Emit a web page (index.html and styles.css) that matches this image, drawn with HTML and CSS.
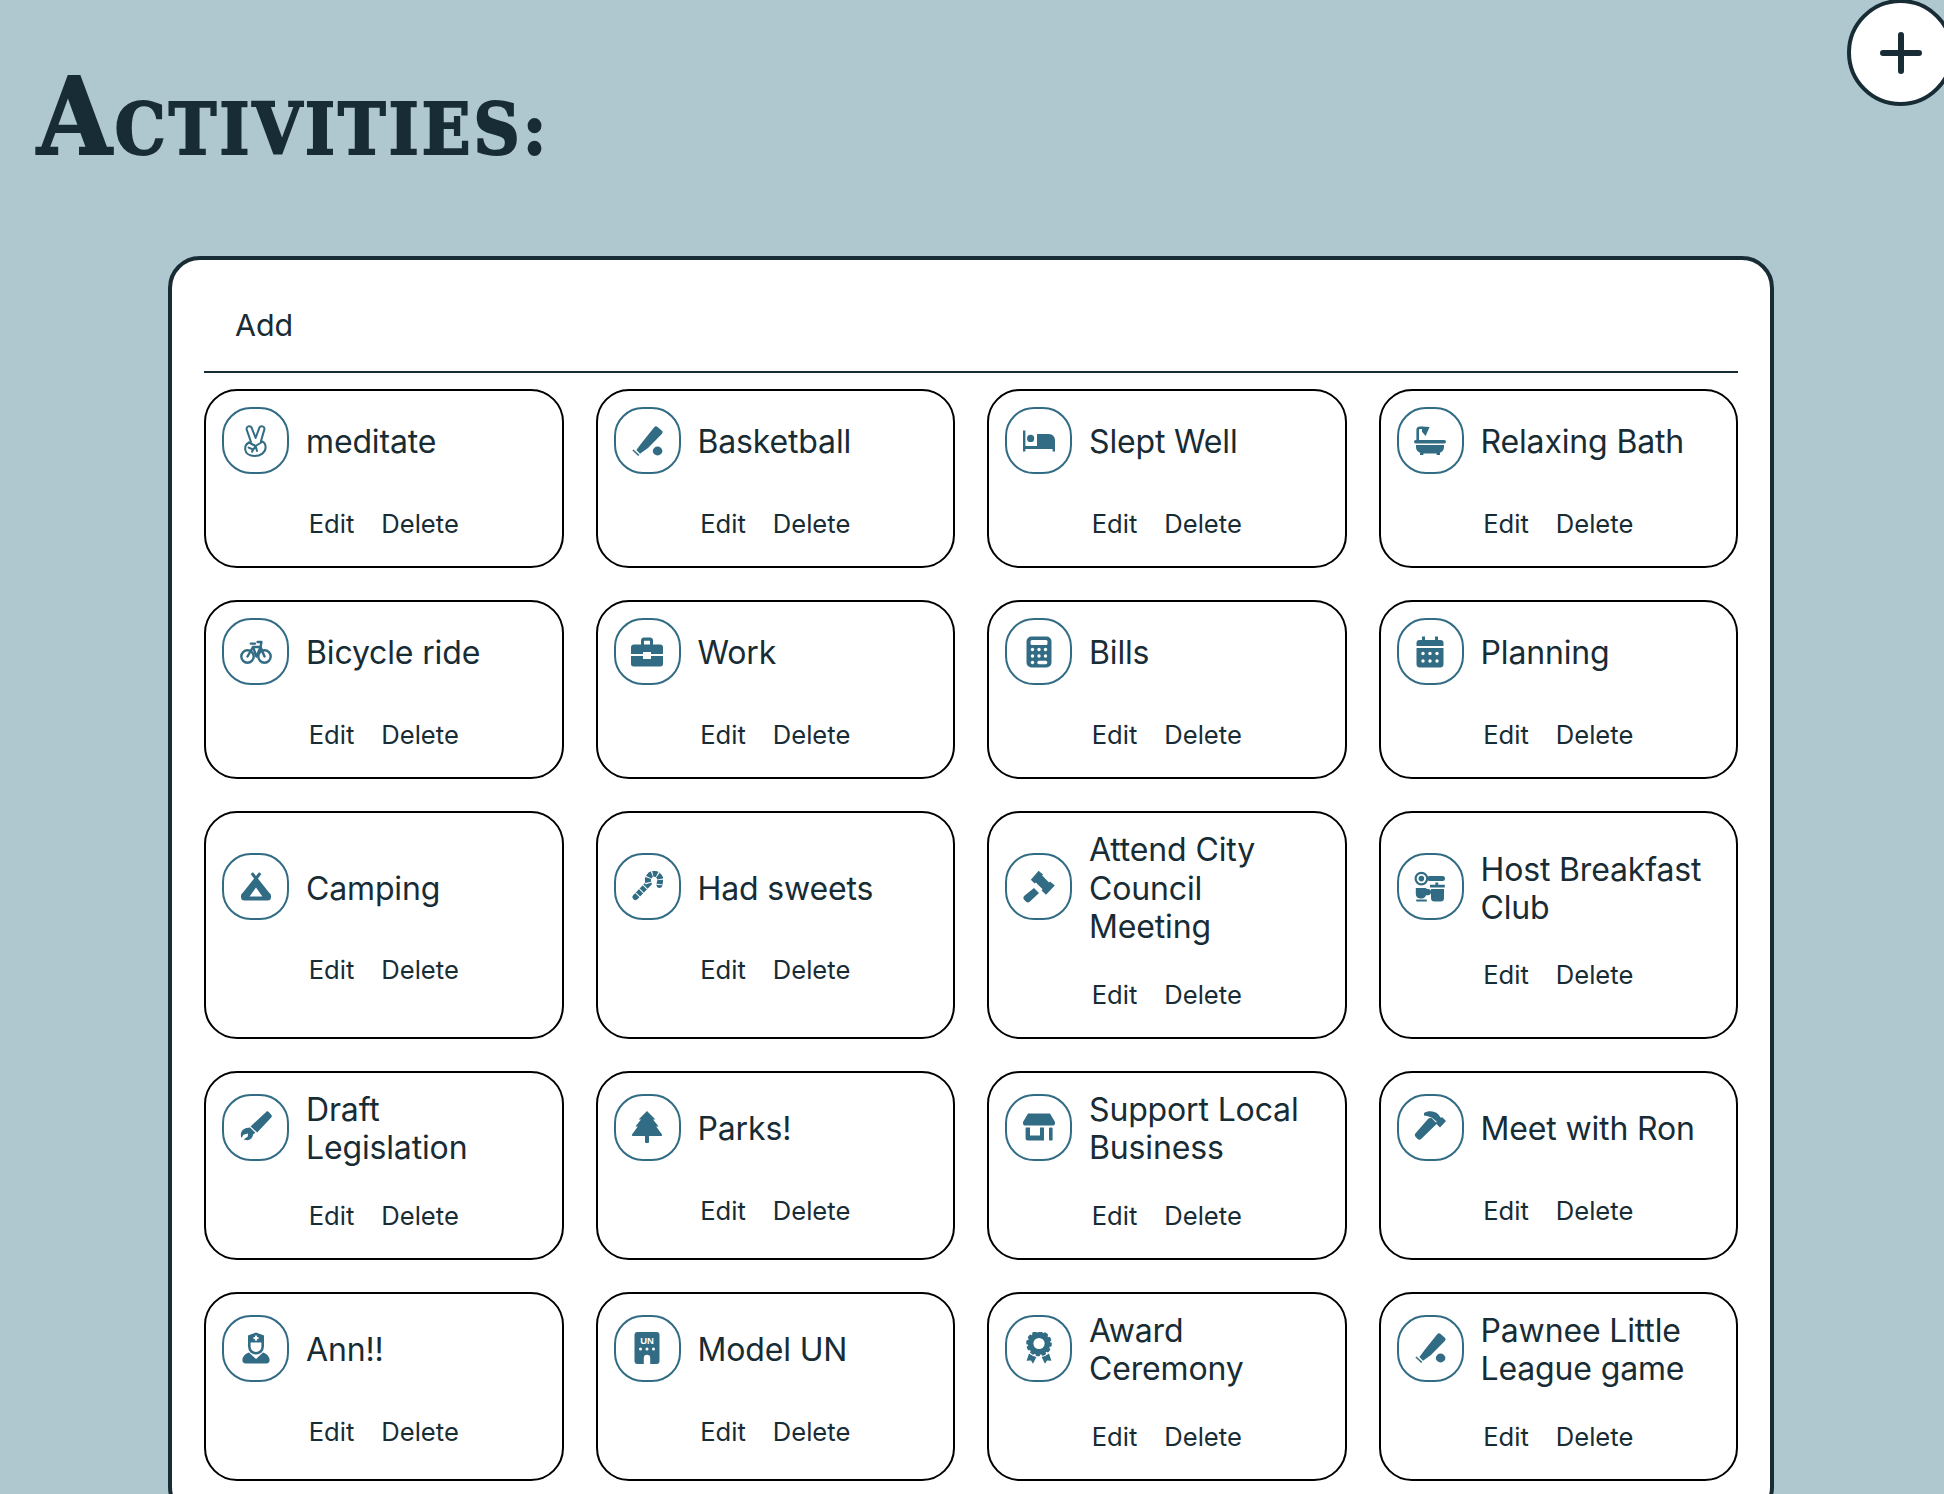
FILE: index.html
```html
<!DOCTYPE html>
<html lang="en">
<head>
    <meta charset="UTF-8">
    <meta name="viewport" content="width=device-width, initial-scale=1.0">
    <title>Activities</title>
    <link rel="stylesheet" href="styles.css">
</head>
<body>

<svg class="sprite" width="0" height="0">
    <symbol id="i-peace" viewBox="0 0 32 32">
        <g fill="none" stroke="currentColor" stroke-width="2" stroke-linecap="round" stroke-linejoin="round">
            <path d="M11 17 L6.6 4.4 a2.7 2.7 0 0 1 5 -1.8 L15.6 13 L19.4 2.6 a2.7 2.7 0 0 1 5 1.8 L21 16"/>
            <path d="M9 17.5 C6 19 5 22 5.2 24.4 C5.6 28.6 9.6 31 14.6 31 C20.6 31 25.6 27.4 25.6 22.6 C25.6 19 23.6 16.6 21 16"/>
            <path d="M9 17.5 L15.6 21 L22 17 M15.6 21 L12 26.6 M8.6 22.6 L12.6 24.2 M15.6 21 L17 26"/>
        </g>
    </symbol>
    <symbol id="i-bat" viewBox="0 0 32 32">
        <path d="M23.200 2.200 a2.400 2.400 0 0 1 3.400 -.2 l4 3.600 a2.400 2.400 0 0 1 .2 3.400 L17 23 L9 28.800 L5.400 25 L10.600 18 z"/>
        <path d="M2.400 24.400 L8.400 30 L7.200 31 L1.400 25.600 z"/>
        <ellipse cx="26.600" cy="26" rx="4.800" ry="4.400"/>
    </symbol>
    <symbol id="i-bed" viewBox="0 0 32 32">
        <path d="M0 5.500 h2.400 V21 H14 V9 H26 a6 6 0 0 1 6 6 V26.500 h-2.400 V24 H2.400 v2.500 H0 z"/>
        <circle cx="7.600" cy="13.400" r="3.600"/>
    </symbol>
    <symbol id="i-bath" viewBox="0 0 32 32">
        <rect x="0" y="15" width="32" height="3.400" rx="1.700"/>
        <path d="M2 20 H30 V22 a6.400 6.400 0 0 1 -4 5.800 V30 H22.600 V28.600 H9.400 V30 H6 V27.800 A6.400 6.400 0 0 1 2 22 z"/>
        <path d="M2.400 15 V5 a3.600 3.600 0 0 1 3.600 -3.600 H8.600 V4 H6 a1 1 0 0 0 -1 1 V15 z"/>
        <path d="M8 1.400 L15.600 2 L11.600 11 L8 6.800 z"/>
    </symbol>
    <symbol id="i-bike" viewBox="0 0 32 32">
        <g fill="none" stroke="currentColor" stroke-width="2.400" stroke-linecap="round" stroke-linejoin="round">
            <circle cx="7.500" cy="20.500" r="6.200"/>
            <circle cx="24.500" cy="20.500" r="6.200"/>
            <path d="M7.500 20.500 L13 11 H20.600 L24.500 20.500 M13 11 L16.400 20.500 L20.600 11 M17.600 6 H21.400 L20.600 11 M10.800 7.600 H15"/>
        </g>
    </symbol>
    <symbol id="i-case" viewBox="0 0 32 32">
        <path d="M10 9 V4 A2.600 2.600 0 0 1 12.600 1.500 H19.400 A2.600 2.600 0 0 1 22 4 V9 H19 V4.800 H13 V9 z"/>
        <path d="M3 8.500 H29 a3 3 0 0 1 3 3 V18 H20 V16 H12 V18 H0 V11.500 a3 3 0 0 1 3 -3 z"/>
        <path d="M0 20 H12 V23 H20 V20 H32 V27.600 A2.800 2.800 0 0 1 29.200 30.500 H2.800 A2.800 2.800 0 0 1 0 27.600 z"/>
    </symbol>
    <symbol id="i-calc" viewBox="0 0 32 32">
        <path fill-rule="evenodd" d="M8.500 .5 H23.500 a5 5 0 0 1 5 5 V26.500 a5 5 0 0 1 -5 5 H8.500 A5 5 0 0 1 3.500 26.500 V5.500 A5 5 0 0 1 8.500 .5 z M9 4 a1.500 1.500 0 0 0 -1.500 1.500 V7.500 a1.500 1.500 0 0 0 1.500 1.500 H23 a1.500 1.500 0 0 0 1.500 -1.500 V5.500 a1.500 1.500 0 0 0 -1.500 -1.500 z"/>
        <g fill="#fff">
            <circle cx="9.500" cy="13.500" r="1.700"/><circle cx="16" cy="13.500" r="1.700"/><circle cx="22.500" cy="13.500" r="1.700"/>
            <circle cx="9.500" cy="20" r="1.700"/><circle cx="16" cy="20" r="1.700"/><circle cx="22.500" cy="20" r="1.700"/>
            <circle cx="9.500" cy="26.500" r="1.700"/><rect x="14.300" y="24.800" width="10" height="3.400" rx="1.700"/>
        </g>
    </symbol>
    <symbol id="i-cal" viewBox="0 0 32 32">
        <path d="M8 .5 h3 V4 H21 V.5 h3 V4 h2.500 a3 3 0 0 1 3 3 V10 H2.500 V7 a3 3 0 0 1 3 -3 H8 z"/>
        <path d="M2.500 12 H29.500 V28 a3.500 3.500 0 0 1 -3.500 3.500 H6 A3.500 3.500 0 0 1 2.500 28 z"/>
        <g fill="#fff">
            <circle cx="9" cy="17.500" r="1.700"/><circle cx="16" cy="17.500" r="1.700"/><circle cx="23" cy="17.500" r="1.700"/>
            <circle cx="9" cy="25" r="1.700"/><circle cx="16" cy="25" r="1.700"/><circle cx="23" cy="25" r="1.700"/>
        </g>
    </symbol>
    <symbol id="i-camp" viewBox="0 0 32 32">
        <path fill-rule="evenodd" d="M10.600 3 l2.400 -1.800 3 3.800 3 -3.800 2.400 1.800 -3.500 4.600 L29 21.400 A4 4 0 0 1 31 25 V26 a3.500 3.500 0 0 1 -3.500 3.500 H4.500 A3.500 3.500 0 0 1 1 26 V25 A4 4 0 0 1 3 21.400 L14.100 7.600 z M16 16.400 L9.600 25.400 H22.400 z"/>
    </symbol>
    <symbol id="i-cane" viewBox="0 0 32 32">
        <path fill="none" stroke="currentColor" stroke-width="6" stroke-linecap="round" d="M4.500 26 L17.500 12.500 C15.500 7 19 2.800 23 2.800 A6.200 6.200 0 0 1 28.800 11.500 L28.500 14"/>
        <path fill="none" stroke="#fff" stroke-width="6.200" stroke-dasharray="1 4.400" stroke-dashoffset="-2.600" d="M4.500 26 L17.500 12.500 C15.500 7 19 2.800 23 2.800 A6.200 6.200 0 0 1 28.800 11.500 L28.500 14"/>
    </symbol>
    <symbol id="i-gavel" viewBox="0 0 32 32">
        <path d="M15.600 .8 L20 4.600 L19.200 5.600 L26 12.400 L27 11.400 L31.800 15.400 L23 24.800 L18.600 20.400 L19.600 19.200 L12.800 12.400 L11.600 13.600 L7.800 9.800 z" transform="translate(0 -1)"/>
        <path d="M11 17 L16 22 L7 30.400 a3 3 0 0 1 -4.200 0 L1.400 29 a3 3 0 0 1 0 -4.200 z"/>
    </symbol>
    <symbol id="i-breakfast" viewBox="0 0 32 32">
        <circle cx="7.400" cy="7.600" r="5.800" fill="none" stroke="currentColor" stroke-width="2.200"/>
        <circle cx="7.400" cy="7.600" r="2.800"/>
        <rect x="13" y="5" width="18" height="5" rx="2.500"/>
        <path d="M1.800 17 H12.400 V18 H14 a2.600 2.600 0 0 1 0 6.200 H12 C11.400 26.200 10 27.400 8 27.400 H6 C3.600 27.400 1.800 25.800 1.800 23 z"/>
        <rect x="2" y="28.400" width="11" height="2" rx="1"/>
        <path d="M21.400 11.400 h2.800 v2.400 H30.800 V16.400 H16 V13.800 h5.400 z"/>
        <path d="M17 18 H30 V27 a3.500 3.500 0 0 1 -3.500 3.500 H20.500 A3.500 3.500 0 0 1 17 27 z"/>
    </symbol>
    <symbol id="i-pen" viewBox="0 0 32 32">
        <path d="M25.600 1.400 a2.200 2.200 0 0 1 3.200 -.4 L31 3.600 a2.200 2.200 0 0 1 0 3.200 L17.200 21.600 L10.600 15.400 z"/>
        <path fill-rule="evenodd" d="M10 16.400 L15.400 21.800 L13 23.600 C12.800 26.600 10.800 29.200 7 29.200 L3.600 28.400 L7.800 25.400 L8 22.400 L3.400 23.800 L1.600 27 C-.4 23 1.400 18.200 6.400 17 z"/>
    </symbol>
    <symbol id="i-tree" viewBox="0 0 32 32">
        <path d="M16 0 L24.400 8.600 H22 L27.600 15.400 H25.200 L31 23.600 A1 1 0 0 1 30.200 25 H18 V30.600 a2 2 0 0 1 -4 0 V25 H1.800 A1 1 0 0 1 1 23.600 L6.800 15.400 H4.400 L10 8.600 H7.600 Z"/>
    </symbol>
    <symbol id="i-store" viewBox="0 0 32 32">
        <path d="M5 2.600 H27 L32 11 V12 a2.600 2.600 0 0 1 -2.600 2.600 H2.600 A2.600 2.600 0 0 1 0 12 V11 z"/>
        <path d="M2.600 16.400 H7 V24.600 H17 V16.400 H21 V29.600 H4.600 a2 2 0 0 1 -2 -2 z"/>
        <rect x="26" y="16.400" width="3.600" height="13.200" rx="1.200"/>
    </symbol>
    <symbol id="i-hammer" viewBox="0 0 32 32">
        <path d="M10 2 C14 -.6 20 -.4 24 3 L27 7 L28 6 L32 10 L26 16.400 L21.600 12 L22.800 10.800 L18.400 7 C15 5.400 12.400 4.800 10 4.400 z"/>
        <path d="M14.400 7.600 C16 6.800 18 6.800 19 8.400 L22 11.400 C23 12.400 22.600 13.400 21 14.400 L7.400 27.800 a2.800 2.800 0 0 1 -4 0 L1.800 26 a2.800 2.800 0 0 1 0 -4 z"/>
    </symbol>
    <symbol id="i-nurse" viewBox="0 0 32 32">
        <path d="M8 3.500 L16 .5 L24 3.500 V14.500 a8 8 0 0 1 -16 0 z"/>
        <path fill="#fff" d="M10.600 10.400 H21.400 V14.500 a5.400 5.400 0 0 1 -10.800 0 z"/>
        <rect x="15" y="3.600" width="2" height="5" fill="#fff"/>
        <rect x="13.500" y="5.100" width="5" height="2" fill="#fff"/>
        <path d="M9 20.400 L16 27 L23 20.400 C27 21.400 29.600 25 29.600 28 A3.200 3.200 0 0 1 26.400 31.500 H5.600 A3.200 3.200 0 0 1 2.400 28 C2.400 25 5 21.400 9 20.400 z"/>
    </symbol>
    <symbol id="i-award" viewBox="0 0 32 32">
        <circle cx="16" cy="11.500" r="11.200"/>
        <circle cx="16" cy="11.500" r="11.600" fill="none" stroke="currentColor" stroke-width="2.400" stroke-linecap="round" stroke-dasharray="2.200 3.860"/>
        <circle cx="16" cy="11.500" r="5.600" fill="#fff"/>
        <path d="M6 21.400 L10 24 L13.400 25 L10 31.800 L8 28.400 L3.600 28.800 z"/>
        <path d="M26 21.400 L22 24 L18.600 25 L22 31.800 L24 28.400 L28.400 28.800 z"/>
    </symbol>
</svg>

<button class="fab" type="button" aria-label="Add activity">
    <svg width="42" height="42" viewBox="0 0 42 42">
        <path d="M3 21 H39 M21 3 V39" fill="none" stroke="currentColor" stroke-width="6" stroke-linecap="round"/>
    </svg>
</button>

<header class="page-head">
    <h1>Activities:</h1>
</header>

<main class="panel">
    <div class="panel-top">
        <a class="add-link">Add</a>
    </div>

    <div class="grid">
        <div class="card">
            <div class="card-main">
                <span class="icon-box"><svg><use href="#i-peace"/></svg></span>
                <span class="title">meditate</span>
            </div>
            <div class="actions"><a>Edit</a><a>Delete</a></div>
        </div>
        <div class="card">
            <div class="card-main">
                <span class="icon-box"><svg><use href="#i-bat"/></svg></span>
                <span class="title">Basketball</span>
            </div>
            <div class="actions"><a>Edit</a><a>Delete</a></div>
        </div>
        <div class="card">
            <div class="card-main">
                <span class="icon-box"><svg><use href="#i-bed"/></svg></span>
                <span class="title">Slept Well</span>
            </div>
            <div class="actions"><a>Edit</a><a>Delete</a></div>
        </div>
        <div class="card">
            <div class="card-main">
                <span class="icon-box"><svg><use href="#i-bath"/></svg></span>
                <span class="title">Relaxing Bath</span>
            </div>
            <div class="actions"><a>Edit</a><a>Delete</a></div>
        </div>

        <div class="card">
            <div class="card-main">
                <span class="icon-box"><svg><use href="#i-bike"/></svg></span>
                <span class="title">Bicycle ride</span>
            </div>
            <div class="actions"><a>Edit</a><a>Delete</a></div>
        </div>
        <div class="card">
            <div class="card-main">
                <span class="icon-box"><svg><use href="#i-case"/></svg></span>
                <span class="title">Work</span>
            </div>
            <div class="actions"><a>Edit</a><a>Delete</a></div>
        </div>
        <div class="card">
            <div class="card-main">
                <span class="icon-box"><svg><use href="#i-calc"/></svg></span>
                <span class="title">Bills</span>
            </div>
            <div class="actions"><a>Edit</a><a>Delete</a></div>
        </div>
        <div class="card">
            <div class="card-main">
                <span class="icon-box"><svg><use href="#i-cal"/></svg></span>
                <span class="title">Planning</span>
            </div>
            <div class="actions"><a>Edit</a><a>Delete</a></div>
        </div>

        <div class="card">
            <div class="card-main">
                <span class="icon-box"><svg><use href="#i-camp"/></svg></span>
                <span class="title">Camping</span>
            </div>
            <div class="actions"><a>Edit</a><a>Delete</a></div>
        </div>
        <div class="card">
            <div class="card-main">
                <span class="icon-box"><svg><use href="#i-cane"/></svg></span>
                <span class="title">Had sweets</span>
            </div>
            <div class="actions"><a>Edit</a><a>Delete</a></div>
        </div>
        <div class="card">
            <div class="card-main">
                <span class="icon-box"><svg><use href="#i-gavel"/></svg></span>
                <span class="title">Attend City Council Meeting</span>
            </div>
            <div class="actions"><a>Edit</a><a>Delete</a></div>
        </div>
        <div class="card">
            <div class="card-main">
                <span class="icon-box"><svg><use href="#i-breakfast"/></svg></span>
                <span class="title">Host Breakfast Club</span>
            </div>
            <div class="actions"><a>Edit</a><a>Delete</a></div>
        </div>

        <div class="card">
            <div class="card-main">
                <span class="icon-box"><svg><use href="#i-pen"/></svg></span>
                <span class="title">Draft Legislation</span>
            </div>
            <div class="actions"><a>Edit</a><a>Delete</a></div>
        </div>
        <div class="card">
            <div class="card-main">
                <span class="icon-box"><svg><use href="#i-tree"/></svg></span>
                <span class="title">Parks!</span>
            </div>
            <div class="actions"><a>Edit</a><a>Delete</a></div>
        </div>
        <div class="card">
            <div class="card-main">
                <span class="icon-box"><svg><use href="#i-store"/></svg></span>
                <span class="title">Support Local Business</span>
            </div>
            <div class="actions"><a>Edit</a><a>Delete</a></div>
        </div>
        <div class="card">
            <div class="card-main">
                <span class="icon-box"><svg><use href="#i-hammer"/></svg></span>
                <span class="title">Meet with Ron</span>
            </div>
            <div class="actions"><a>Edit</a><a>Delete</a></div>
        </div>

        <div class="card">
            <div class="card-main">
                <span class="icon-box"><svg><use href="#i-nurse"/></svg></span>
                <span class="title">Ann!!</span>
            </div>
            <div class="actions"><a>Edit</a><a>Delete</a></div>
        </div>
        <div class="card">
            <div class="card-main">
                <span class="icon-box">
                    <svg viewBox="0 0 32 32">
                        <path d="M6.500 0 H25.500 a3 3 0 0 1 3 3 V29 a3 3 0 0 1 -3 3 H6.500 a3 3 0 0 1 -3 -3 V3 a3 3 0 0 1 3 -3 z"/>
                        <text x="16" y="11.500" class="un-text">UN</text>
                        <g fill="#fff">
                            <circle cx="9.500" cy="17" r="1.500"/><circle cx="16" cy="17" r="1.500"/><circle cx="22.500" cy="17" r="1.500"/>
                            <path d="M12.800 32 V26 a3.200 3.200 0 0 1 6.400 0 V32 z"/>
                        </g>
                    </svg>
                </span>
                <span class="title">Model UN</span>
            </div>
            <div class="actions"><a>Edit</a><a>Delete</a></div>
        </div>
        <div class="card">
            <div class="card-main">
                <span class="icon-box"><svg><use href="#i-award"/></svg></span>
                <span class="title">Award Ceremony</span>
            </div>
            <div class="actions"><a>Edit</a><a>Delete</a></div>
        </div>
        <div class="card">
            <div class="card-main">
                <span class="icon-box"><svg><use href="#i-bat"/></svg></span>
                <span class="title">Pawnee Little League game</span>
            </div>
            <div class="actions"><a>Edit</a><a>Delete</a></div>
        </div>
    </div>
</main>

</body>
</html>
```

FILE: styles.css
```css
* {
    box-sizing: border-box;
    margin: 0;
    padding: 0;
}
html {
    height: 100%;
    overflow: hidden;
}
body {
    position: relative;
    height: 100%;
    overflow: hidden;
    font-family: Inter, "Noto Sans", sans-serif;
    background-color: #afc7cf;
    color: #182c35;
}
.sprite {
    position: absolute;
}
.fab {
    position: absolute;
    top: -1px;
    right: -10px;
    width: 107px;
    height: 107px;
    display: flex;
    align-items: center;
    justify-content: center;
    background-color: #ffffff;
    color: #182c35;
    border: 4px solid #182c35;
    border-radius: 50%;
}
.page-head {
    height: 256px;
    padding: 53px 0 0 37px;
}
h1 {
    font-family: "DejaVu Serif", serif;
    font-stretch: condensed;
    font-weight: 700;
    font-size: 71px;
    line-height: 127px;
    letter-spacing: 3.100px;
    text-transform: uppercase;
    -webkit-text-stroke: 2px #182c35;
}
h1::first-letter {
    font-size: 107px;
}
.panel {
    margin: 0 170px 0 168px;
    padding: 0 32px 34px;
    background-color: #ffffff;
    border: 4px solid #182c35;
    border-radius: 32px;
}
.panel-top {
    padding: 47px 31px 27px;
    border-bottom: 2px solid #182c35;
    margin-bottom: 16px;
}
.add-link {
    display: block;
    font-size: 30.4px;
    line-height: 37px;
}
.grid {
    display: grid;
    grid-template-columns: repeat(4, 1fr);
    gap: 32px;
}
.card {
    display: flex;
    flex-direction: column;
    justify-content: center;
    padding: 16px;
    border: 2px solid #000000;
    border-radius: 33px;
}
.card-main {
    display: flex;
    align-items: center;
    gap: 17px;
}
.icon-box {
    flex: none;
    width: 67px;
    height: 67px;
    display: flex;
    align-items: center;
    justify-content: center;
    border: 2px solid #326c84;
    border-radius: 29px;
    color: #326c84;
}
.icon-box svg {
    width: 32px;
    height: 32px;
    fill: currentColor;
}
.un-text {
    font-family: "Liberation Sans", sans-serif;
    font-size: 9.500px;
    font-weight: 700;
    text-anchor: middle;
    fill: #ffffff;
}
.title {
    padding-top: 2px;
    margin-bottom: -2px;
    font-size: 32px;
    line-height: 38.4px;
    letter-spacing: -0.15px;
}
.actions {
    display: flex;
    justify-content: center;
    gap: 27px;
    margin-top: 34px;
    padding-bottom: 11.200px;
    font-size: 25.6px;
    line-height: 31px;
}
```
